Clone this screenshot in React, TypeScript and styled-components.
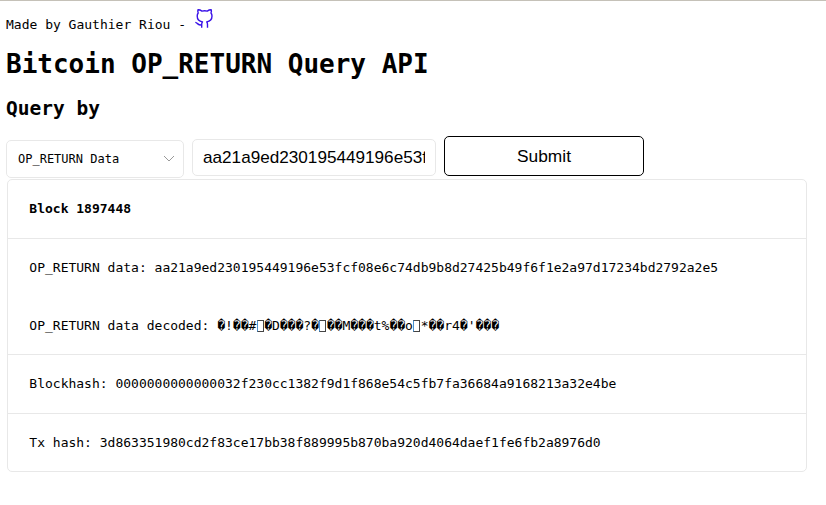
import React from "react";
import styled, { createGlobalStyle } from "styled-components";

const GlobalStyle = createGlobalStyle`
  * { box-sizing: border-box; }
  body { margin: 0; background: #fff; color: #000; font: 13px/15px "DejaVu Sans Mono", monospace; }
`;
const Page = styled.main`
  height: 505px; padding: 0 19px 0 6px; border-top: 1px solid #c5c1b8; overflow: hidden;
`;
const Credit = styled.div`
  display: flex; align-items: flex-start; height: 47px; padding-top: 16px; white-space: pre;
`;
const GitLink = styled.a`
  color: #3a12e8; display: flex; margin: -9px 0 0 1px;
`;
const Title = styled.h1`
  margin: 0; font-size: 26px; line-height: 32px; height: 48px; font-weight: 700;
`;
const Subtitle = styled.h2`
  margin: 0; font-size: 19.5px; line-height: 26px; height: 40px; font-weight: 700;
`;
const Form = styled.form`
  display: flex; align-items: flex-start; height: 43px; gap: 8px;
`;
const Select = styled.div`
  display: flex; align-items: center; justify-content: space-between; width: 178px; height: 38px;
  margin-top: 4px; padding: 0 8px 0 11px; border: 1px solid #e8e8e8; border-radius: 5px; font-size: 12px;
`;
const Input = styled.input`
  width: 244px; height: 37px; margin: 3px 0 0; padding: 0 10px; border: 1px solid #e8e8e8; border-radius: 5px;
  color: #000; outline: 0; font: 17.15px "Liberation Sans", sans-serif;
`;
const Submit = styled.button`
  width: 200px; height: 40px; border: 1px solid #000; border-radius: 5px; background: #fff; color: #000;
  padding: 1px 0 0; font: 17.33px "Liberation Sans", sans-serif;
`;
const Card = styled.section`
  margin-left: 1px; width: 800px; height: 293px; border: 1px solid #e8e8e8; border-radius: 5px;
`;
const Row = styled.div<{ $divided?: boolean; $height?: number; $bold?: boolean; $lift?: number }>`
  display: flex; align-items: center; height: ${p => p.$height ?? 58}px; white-space: pre;
  padding: 0 0 ${p => p.$lift ?? 0}px 21.33px;
  font-weight: ${p => (p.$bold ? 700 : 400)};
  border-bottom: ${p => (p.$divided ? "1px solid #e8e8e8" : "0")};
`;
const MissingGlyph = styled.span`
  width: 7px; height: 12px; margin: 1px 0.33px 0 0.5px; border: 1px solid #444; border-left-color: #4a90d0;
`;

const decoded = ["\uFFFD!\uFFFD\uFFFD#", "\uFFFDD\uFFFD\uFFFD\uFFFD?\uFFFD", "\uFFFD\uFFFDM\uFFFD\uFFFD\uFFFDt%\uFFFD\uFFFDo", "*\uFFFD\uFFFDr4\uFFFD'\uFFFD\uFFFD\uFFFD"];

export default function App() {
  return (
    <>
      <GlobalStyle />
      <Page>
        <Credit>
          Made by Gauthier Riou - <GitLink href="#" aria-label="GitHub">
            <svg width="20" height="21" viewBox="0 0 20 21" fill="none" stroke="currentColor" strokeWidth="1.4" strokeLinejoin="round">
              <path d="M6.7 19.7V16.3C6.7 15.3 7 14.6 7.5 13.9C4.5 13.5 2.2 11.8 2.2 8.1C2.2 6.8 2.5 5.8 3.2 5C2.7 3.8 2.7 2.7 3 1.8C4.4 1.7 5.8 2.3 6.9 3.1Q9.6 2.5 12.3 3.1C13.4 2.3 14.8 1.7 16.2 1.8C16.5 2.7 16.5 3.8 16 5C16.7 5.8 17 6.8 17 8.1C17 11.8 14.7 13.5 11.7 13.9C12.2 14.6 12.5 15.3 12.5 16.3V19.7M0.3 14.4C2.8 14.8 2.6 17.4 6.7 17" />
            </svg>
          </GitLink>
        </Credit>
        <Title>Bitcoin OP_RETURN Query API</Title>
        <Subtitle>Query by</Subtitle>
        <Form>
          <Select>
            OP_RETURN Data
            <svg width="12" height="8" viewBox="0 0 12 8" fill="none" stroke="#999"><path d="m1 1 5 5 5-5" /></svg>
          </Select>
          <Input aria-label="OP_RETURN data" readOnly value="aa21a9ed230195449196e53fcf08e6c74db9b8d27425b49f6f1e2a97d17234bd2792a2e5" />
          <Submit type="button">Submit</Submit>
        </Form>
        <Card>
          <Row $divided $bold $height={59} $lift={2}>Block 1897448</Row>
          <Row $lift={2}>OP_RETURN data: aa21a9ed230195449196e53fcf08e6c74db9b8d27425b49f6f1e2a97d17234bd2792a2e5</Row>
          <Row $divided>
            <span>OP_RETURN data decoded: </span>
            {decoded.map((part, i) => (
              <React.Fragment key={i}>
                {i > 0 && <MissingGlyph />}
                <span>{part}</span>
              </React.Fragment>
            ))}
          </Row>
          <Row $divided $height={59} $lift={2}>Blockhash: 0000000000000032f230cc1382f9d1f868e54c5fb7fa36684a9168213a32e4be</Row>
          <Row $height={57}>Tx hash: 3d863351980cd2f83ce17bb38f889995b870ba920d4064daef1fe6fb2a8976d0</Row>
        </Card>
      </Page>
    </>
  );
}
